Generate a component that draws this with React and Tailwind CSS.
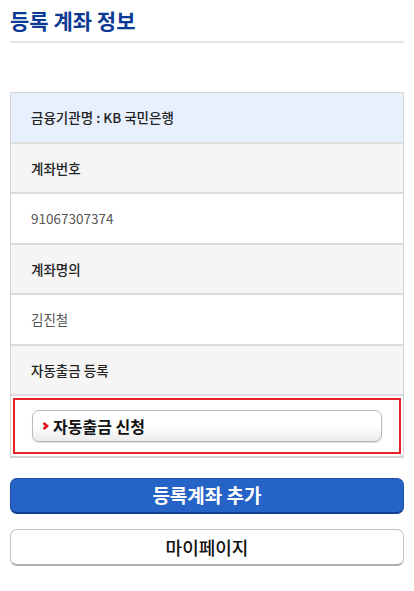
const FONT = { fontFamily: '"Noto Sans CJK KR", "Noto Sans", sans-serif' };

const rows = [
  { text: '금융기관명 : KB 국민은행', kind: 'head' },
  { text: '계좌번호', kind: 'label' },
  { text: '91067307374', kind: 'value' },
  { text: '계좌명의', kind: 'label' },
  { text: '김진철', kind: 'value' },
  { text: '자동출금 등록', kind: 'label' },
];

function Row({ text, kind }) {
  const bg =
    kind === 'head' ? 'bg-[#e8f0fe]' : kind === 'label' ? 'bg-[#f5f5f5]' : 'bg-white';
  const tx =
    kind === 'value' ? 'text-[#555] font-normal' : 'text-[#222] font-medium';
  return (
    <div
      className={`h-[50.5px] flex items-center px-5 border-b-2 border-[#dcdcdc] text-[13.5px] ${bg} ${tx}`}
    >
      {text}
    </div>
  );
}

export default function App() {
  return (
    <div className="w-[414px] h-[591px] bg-white px-[10px]" style={FONT}>
      <div className="pt-[5px] pb-[6px] border-b-2 border-[#e6e6e6]">
        <h1 className="text-[21px] font-bold text-[#0b3a94] leading-[30px]">등록 계좌 정보</h1>
      </div>

      <div className="mt-[49px] border border-[#d4d4d4] border-b-2">
        {rows.map((r, i) => (
          <Row key={i} {...r} />
        ))}
        <div className="p-[2px] bg-white">
          <div className="border-2 border-[#e8222a] h-[56px] flex items-center pl-[17px] pr-[17px]">
            <button className="w-full h-[32px] rounded-[7px] border border-[#b8b8b8] bg-gradient-to-b from-white via-white to-[#ececec] shadow-[0_1px_1px_rgba(0,0,0,0.15)] flex items-center pl-[9px] text-[16px] font-bold text-[#111]">
              <svg width="7" height="10" viewBox="0 0 7 10" className="mr-[4px]">
                <path d="M1.5 2 L5 5 L1.5 8" stroke="#e0101a" strokeWidth="2.6" fill="none" />
              </svg>
              자동출금 신청
            </button>
          </div>
        </div>
      </div>

      <button className="mt-[20px] w-full h-[36px] rounded-[7px] bg-[#2563c6] border border-[#1b4fa8] border-b-2 border-b-[#123f8f] text-white text-[19px] font-bold flex items-center justify-center">
        등록계좌 추가
      </button>

      <button className="mt-[15px] w-full h-[37px] rounded-[7px] bg-white border border-[#c4c4c4] border-b-2 border-b-[#b0b0b0] text-[#111] text-[18px] font-medium flex items-center justify-center">
        마이페이지
      </button>
    </div>
  );
}
